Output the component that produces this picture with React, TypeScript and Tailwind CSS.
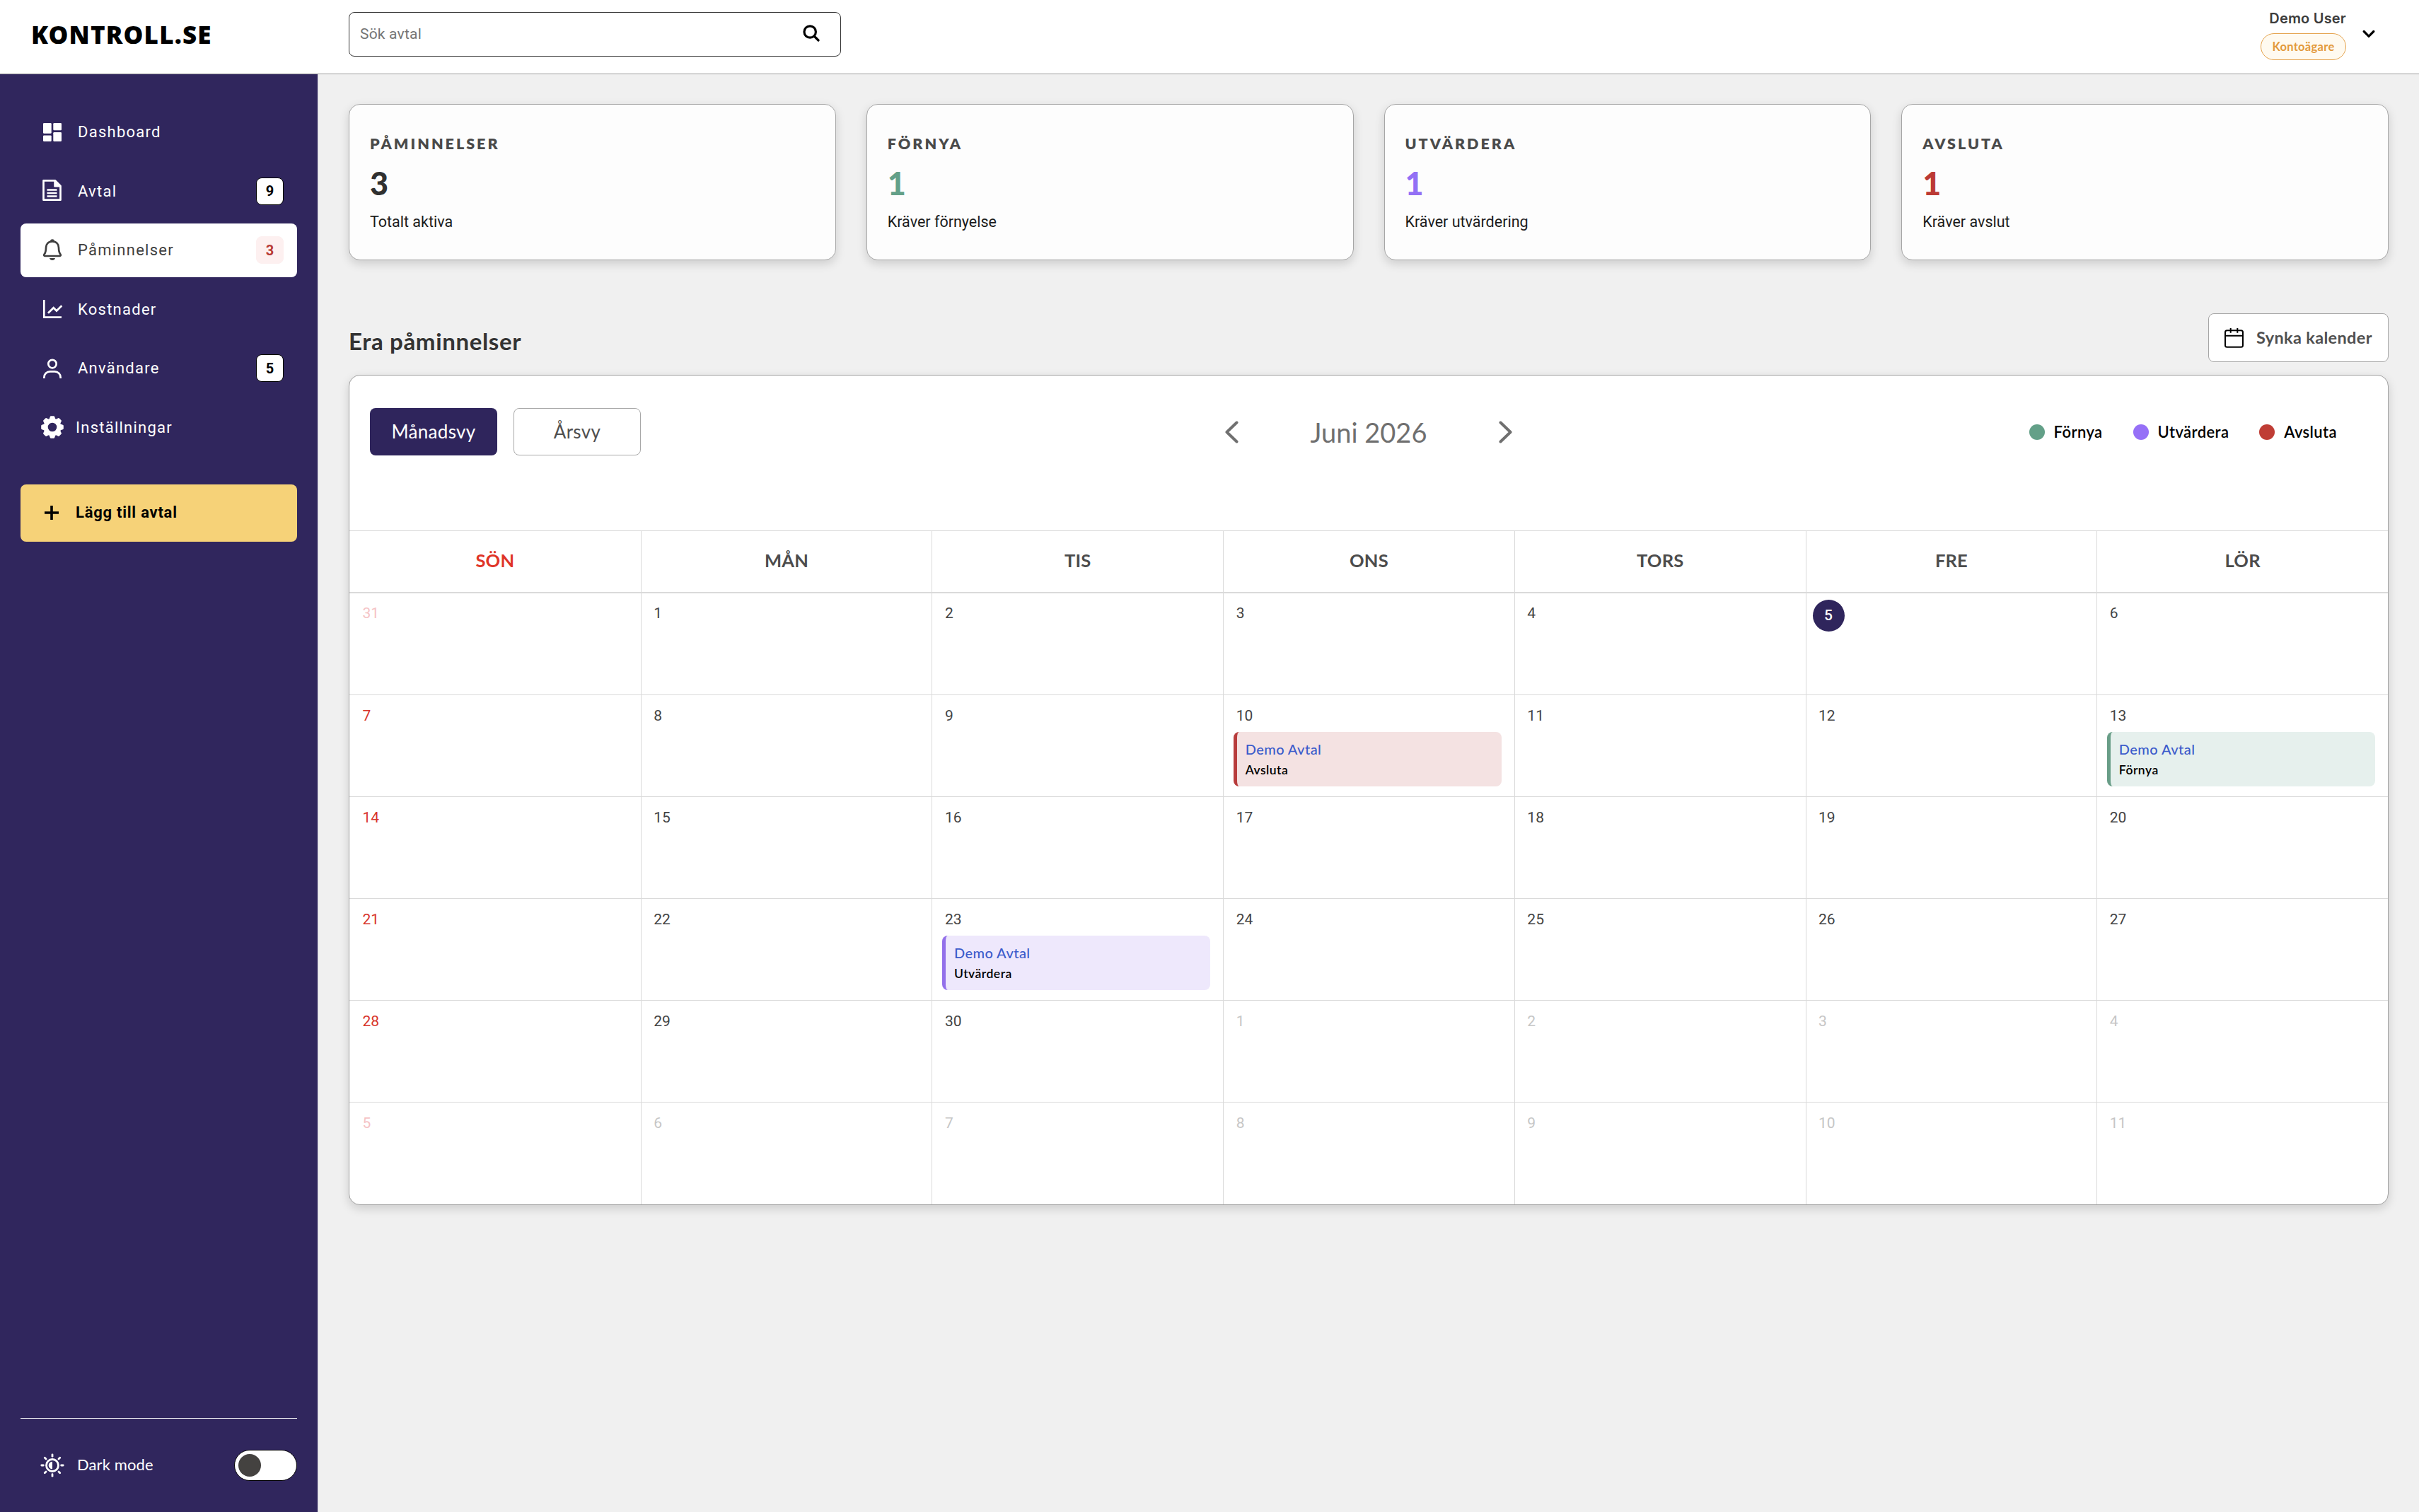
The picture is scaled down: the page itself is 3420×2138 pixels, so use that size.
import React from "react";

type EventKind = "renew" | "evaluate" | "end";

interface NavItem {
  label: string;
  icon: React.ReactNode;
  badge?: number;
  active?: boolean;
  gap?: string;
}

interface Day {
  day: number;
  outside?: boolean;
  today?: boolean;
  event?: EventKind;
}

const DashboardIcon = () => (
  <svg width="32" height="32" viewBox="0 0 32 32" fill="currentColor">
    <rect x="3" y="3" width="11.7" height="14.7" rx="1.2" />
    <rect x="3" y="20.4" width="11.7" height="8.6" rx="1.2" />
    <rect x="17.3" y="3" width="11.7" height="10.3" rx="1.2" />
    <rect x="17.3" y="16" width="11.7" height="13" rx="1.2" />
  </svg>
);

const DocumentIcon = () => (
  <svg width="32" height="32" viewBox="0 0 32 32" fill="none" stroke="currentColor" strokeWidth="2.7" strokeLinejoin="round">
    <path d="M3.5 1.3h16.3l7.7 7.7v19.7h-24z" />
    <path d="M18.8 1.6v8.4h8.4z" fill="currentColor" strokeWidth="1" />
    <path d="M8.5 14.6h14M8.5 19h14M8.5 23.6h14" strokeWidth="2.5" />
  </svg>
);

const BellIcon = () => (
  <svg width="32" height="32" viewBox="0 0 32 32" fill="none" stroke="currentColor" strokeWidth="2.7" strokeLinejoin="round">
    <path d="M16 3.4c-5.6 0-9 3.8-9 8.8 0 5.4-.7 7.2-2.4 9.3-.9 1.100-.5 2.500 1 2.500h20.800c1.500 0 1.900-1.400 1-2.500-1.700-2.100-2.400-3.900-2.400-9.300 0-5-3.400-8.800-9-8.800z" />
    <path d="M14 2.800c0-2 4-2 4 0" strokeWidth="2" />
    <path d="M12 27h8c-.4 1.900-2 3-4 3s-3.600-1.100-4-3z" fill="currentColor" stroke="none" />
  </svg>
);

const ChartIcon = () => (
  <svg width="32" height="32" viewBox="0 0 32 32" fill="none" stroke="currentColor" strokeWidth="2.7">
    <path d="M4.3 3v24.700H29" />
    <path d="M10 21.800l7.700-7.600 4.300 4.300 7.300-7.300" />
  </svg>
);

const UserIcon = () => (
  <svg width="32" height="32" viewBox="0 0 32 32" fill="none" stroke="currentColor" strokeWidth="2.7">
    <circle cx="16" cy="9.600" r="5.700" />
    <path d="M4.400 30v-1.500a8.200 8.200 0 0 1 8.200-8.200h6.800a8.200 8.200 0 0 1 8.200 8.200V30" />
  </svg>
);

const teeth = [0, 45, 90, 135, 180, 225, 270, 315];

const GearIcon = () => (
  <svg width="32" height="34" viewBox="-16.5 -16.5 33 33" fill="currentColor">
    <circle r="9.7" fill="none" stroke="currentColor" strokeWidth="6.4" />
    {teeth.map((angle) => (
      <path
        key={angle}
        d="M-4.600 -11.500L-3.300 -15.300Q-3 -16.300 -2 -16.300H2Q3 -16.300 3.300 -15.300L4.600 -11.500Z"
        transform={`rotate(${angle})`}
      />
    ))}
  </svg>
);

const SunIcon = () => (
  <svg width="34" height="34" viewBox="-17 -17 34 34" fill="none" stroke="currentColor" strokeWidth="2.8" strokeLinecap="round">
    <circle r="8.5" />
    <path d="M0 -5.300a5.300 5.300 0 0 0 0 10.600z" fill="currentColor" stroke="none" />
    {teeth.map((angle) => (
      <path key={angle} d="M0 -12.700V-15.200" transform={`rotate(${angle})`} />
    ))}
  </svg>
);

const SearchIcon = () => (
  <svg width="24" height="24" viewBox="0 0 24 24" fill="none" stroke="currentColor" strokeWidth="3.2" strokeLinecap="round">
    <circle cx="10.2" cy="10" r="8.2" />
    <path d="M16.500 16.500l5.500 5.500" />
  </svg>
);

const CalendarIcon = () => (
  <svg width="27" height="28" viewBox="0 0 27 28" fill="none" stroke="currentColor" strokeWidth="2">
    <rect x="1" y="3.2" width="25" height="23.5" rx="2.5" />
    <path d="M1 10.800h25M8.700 0v6.800M18.300 0v6.800" />
  </svg>
);

const navItems: NavItem[] = [
  { label: "Dashboard", icon: <DashboardIcon /> },
  { label: "Avtal", icon: <DocumentIcon />, badge: 9 },
  { label: "Påminnelser", icon: <BellIcon />, badge: 3, active: true },
  { label: "Kostnader", icon: <ChartIcon /> },
  { label: "Användare", icon: <UserIcon />, badge: 5 },
  { label: "Inställningar", icon: <GearIcon />, gap: "gap-[17px]" },
];

const stats = [
  { title: "Påminnelser", value: 3, text: "Totalt aktiva", color: "text-[#303030]" },
  { title: "Förnya", value: 1, text: "Kräver förnyelse", color: "text-[#63a088]" },
  { title: "Utvärdera", value: 1, text: "Kräver utvärdering", color: "text-[#9370f5]" },
  { title: "Avsluta", value: 1, text: "Kräver avslut", color: "text-[#bb3a34]" },
];

const events: Record<EventKind, { label: string; dot: string; box: string }> = {
  renew: { label: "Förnya", dot: "bg-[#63a088]", box: "border-[#689d87] bg-[#e6f0ed]" },
  evaluate: { label: "Utvärdera", dot: "bg-[#9670f7]", box: "border-[#9370ea] bg-[#eee8fc]" },
  end: { label: "Avsluta", dot: "bg-[#bf3d35]", box: "border-[#b83c3c] bg-[#f4e2e2]" },
};

const weekdays = ["SÖN", "MÅN", "TIS", "ONS", "TORS", "FRE", "LÖR"];

const dayEvents: Record<number, EventKind> = { 10: "end", 13: "renew", 23: "evaluate" };

// 31 maj, 1-30 juni, 1-11 juli
const days: Day[] = [
  { day: 31, outside: true },
  ...Array.from({ length: 30 }, (_, i) => ({ day: i + 1, today: i + 1 === 5, event: dayEvents[i + 1] })),
  ...Array.from({ length: 11 }, (_, i) => ({ day: i + 1, outside: true })),
];

const Header = () => (
  <header className="flex h-[105px] shrink-0 items-start border-b border-[#9c9c9c] bg-white">
    <div className="w-[493px] pl-[44px] pt-[26px] font-['Noto_Sans',sans-serif] text-[35px] font-black leading-[45px] tracking-[1.15px] text-black">
      KONTROLL.SE
    </div>
    <div className="mt-[17px] flex h-[63px] w-[696px] items-center justify-between rounded-lg border border-[#333] pl-[15px] pr-[29px]">
      <span className="pt-px text-[21px] tracking-[0.2px] text-[#757575]">Sök avtal</span>
      <span className="-mt-1 text-black">
        <SearchIcon />
      </span>
    </div>
    <div className="ml-auto flex items-start gap-[23px] pr-[62px]">
      <div className="flex flex-col items-end pt-[14px]">
        <span className="font-[Inter,sans-serif] text-[20px] font-semibold leading-6 tracking-[0.2px] text-[#3c3c3c]">
          Demo User
        </span>
        <span className="mt-[9px] flex h-[38px] w-[121px] items-center justify-center rounded-full border border-[#e5a34d] bg-[#fffaf0] font-[Lato,sans-serif] text-[16.5px] font-bold leading-5 tracking-[0.3px] text-[#e39a3c]">
          Kontoägare
        </span>
      </div>
      <svg className="mt-[42px]" width="18" height="12" viewBox="0 0 18 12" fill="none" stroke="black" strokeWidth="3.2" strokeLinecap="round">
        <path d="M2.200 2.500l6.800 6.800 6.800-6.800" />
      </svg>
    </div>
  </header>
);

const Sidebar = () => (
  <aside className="flex w-[450px] shrink-0 flex-col border-r border-[#d8d6e0] bg-[#30265d] px-[29px] pt-[44px] text-white">
    <nav className="flex flex-col gap-2">
      {navItems.map(({ label, icon, badge, active, gap = "gap-5" }) => (
        <div
          key={label}
          className={`flex h-[75.5px] items-center rounded-lg pl-[29px] pr-[19px] ${gap} ${
            active ? "bg-white text-[#3f3f3f]" : ""
          }`}
        >
          {icon}
          <span className="text-[22px] tracking-[1.25px]">{label}</span>
          {badge && (
            <span
              className={`ml-auto flex h-[39px] w-[39px] items-center justify-center rounded-lg border text-[20px] font-bold ${
                active ? "border-[#fdf0f0] bg-[#fdf0f0] text-[#b83a35]" : "border-black bg-white text-black"
              }`}
            >
              {badge}
            </span>
          )}
        </div>
      ))}
    </nav>
    <button className="mt-[43px] flex h-[81px] items-center gap-[24px] rounded-lg bg-[#f6d278] pb-[2px] pl-[34px] text-[22px] font-bold tracking-[0.75px] text-black">
      <svg width="20" height="20" viewBox="0 0 20 20" stroke="currentColor" strokeWidth="3.6">
        <path d="M10 0v20M0 10h20" />
      </svg>
      Lägg till avtal
    </button>
    <div className="mt-auto flex items-center border-t border-white py-[44px] pl-[28px]">
      <SunIcon />
      <span className="ml-[18px] pb-[3px] font-[Lato,sans-serif] text-[22px] leading-7 tracking-[0.1px]">Dark mode</span>
      <div className="ml-auto flex h-[44px] w-[89px] items-center rounded-full border border-black bg-white pl-[5px]">
        <div className="h-8 w-8 rounded-full bg-[#444240]"></div>
      </div>
    </div>
  </aside>
);

const StatCard = ({ title, value, text, color }: (typeof stats)[number]) => (
  <div className="h-[221px] rounded-[16px] border border-[#a6a6a6] bg-[#fdfdfd] pl-[29px] pt-[40px] shadow-[0_5px_14px_rgba(0,0,0,0.15)]">
    <h3 className="font-[Lato,sans-serif] text-[21.5px] font-extrabold uppercase leading-[30px] tracking-[3px] text-[#4a4a4a]">
      {title}
    </h3>
    <p className={`mt-[14px] font-[Lato,sans-serif] text-[45px] font-black leading-[54px] ${color}`}>{value}</p>
    <p className="mt-[15px] text-[21.5px] leading-[26px] text-[#1c1c1c]">{text}</p>
  </div>
);

const DayCell = ({ cell, index }: { cell: Day; index: number }) => {
  const sunday = index % 7 === 0;
  let color = "text-[#444]";
  if (sunday) color = cell.outside ? "text-[#f5c3c5]" : "text-[#d8352b]";
  else if (cell.outside) color = "text-[#c6c6c6]";

  return (
    <div className={`h-[144px] border-[#dadada] text-[21px] ${sunday ? "pl-px" : "border-l"} ${index < 35 ? "border-b" : ""}`}>
      {cell.today ? (
        <div className="ml-[9px] mt-[9px] flex h-[45px] w-[45px] items-center justify-center rounded-full bg-[#2f255c] font-medium text-white">
          {cell.day}
        </div>
      ) : (
        <div className={`pl-[17.5px] leading-[22px] ${index < 7 ? "pt-[17px]" : "pt-[18px]"} ${color}`}>{cell.day}</div>
      )}
      {cell.event && (
        <div
          className={`ml-[13.5px] mr-[18px] mt-[12px] h-[77px] rounded-lg border-l-[5px] pl-[12px] pt-[12px] font-[Lato,sans-serif] ${events[cell.event].box}`}
        >
          <p className="text-[20px] font-medium leading-6 tracking-[0.45px] text-[#3b5bcb]">Demo Avtal</p>
          <p className="mt-[6px] text-[17.5px] font-semibold leading-6 tracking-[0.5px] text-black">
            {events[cell.event].label}
          </p>
        </div>
      )}
    </div>
  );
};

const Calendar = () => (
  <section className="mt-[18px] overflow-hidden rounded-[16px] border border-[#a0a0a0] bg-white shadow-[0_5px_14px_rgba(0,0,0,0.15)]">
    <div className="h-[220px] border-b border-[#dadada] pt-[46px] font-[Lato,sans-serif]">
      <div className="grid h-[67px] grid-cols-3 items-center">
        <div className="flex gap-[23px] pl-[29px] text-[26px] tracking-[0.3px]">
          <button className="h-[67px] w-[180px] rounded-lg bg-[#2f255c] text-white">Månadsvy</button>
          <button className="h-[67px] w-[180px] rounded-lg border border-[#a8a8a8] bg-white text-[#505050]">Årsvy</button>
        </div>
        <div className="flex items-center justify-center text-[#707070]">
          <svg width="19" height="32" viewBox="0 0 19 32" fill="none" stroke="currentColor" strokeWidth="4" strokeLinecap="round" strokeLinejoin="round">
            <path d="M16.500 2.500L2.500 16l14 13.500" />
          </svg>
          <h2 className="mx-[102px] pt-px text-[38px] leading-[46px]">Juni 2026</h2>
          <svg width="19" height="32" viewBox="0 0 19 32" fill="none" stroke="currentColor" strokeWidth="4" strokeLinecap="round" strokeLinejoin="round">
            <path d="M2.500 2.500l14 13.500-14 13.500" />
          </svg>
        </div>
        <div className="flex justify-end gap-[43px] pr-[72px] text-[22px] font-semibold tracking-[0.4px] text-black">
          {Object.values(events).map(({ label, dot }) => (
            <div key={label} className="flex items-center gap-[13px]">
              <span className={`h-[22px] w-[22px] rounded-full ${dot}`}></span>
              {label}
            </div>
          ))}
        </div>
      </div>
    </div>
    <div className="grid grid-cols-7 border-b-2 border-[#dadada]">
      {weekdays.map((name, i) => (
        <div
          key={name}
          className={`flex h-[86px] items-center justify-center border-[#dadada] pb-[4px] font-[Lato,sans-serif] text-[25.5px] font-bold tracking-[0.2px] ${
            i > 0 ? "border-l text-[#4c4c4c]" : "text-[#df3427]"
          }`}
        >
          {name}
        </div>
      ))}
    </div>
    <div className="grid grid-cols-7">
      {days.map((cell, i) => (
        <DayCell key={i} cell={cell} index={i} />
      ))}
    </div>
  </section>
);

export default function App() {
  return (
    <div className="flex h-[2138px] w-full flex-col overflow-hidden bg-[#f0f0f0] font-[Roboto,sans-serif]">
      <Header />
      <div className="flex min-h-0 flex-1">
        <Sidebar />
        <main className="min-w-0 flex-1 px-[43px] pt-[42px]">
          <div className="grid grid-cols-4 gap-[43px]">
            {stats.map((stat) => (
              <StatCard key={stat.title} {...stat} />
            ))}
          </div>
          <div className="mt-[75px] flex items-center justify-between font-[Lato,sans-serif]">
            <h1 className="pt-[9px] text-[33px] font-bold leading-10 tracking-[0.65px] text-[#333]">Era påminnelser</h1>
            <button className="flex h-[69px] w-[255px] items-center gap-[18px] rounded-lg border border-[#a6a6a6] bg-white pl-[22px] text-[23.5px] font-bold tracking-[0.35px] text-[#505050]">
              <span className="text-black">
                <CalendarIcon />
              </span>
              Synka kalender
            </button>
          </div>
          <Calendar />
        </main>
      </div>
    </div>
  );
}
